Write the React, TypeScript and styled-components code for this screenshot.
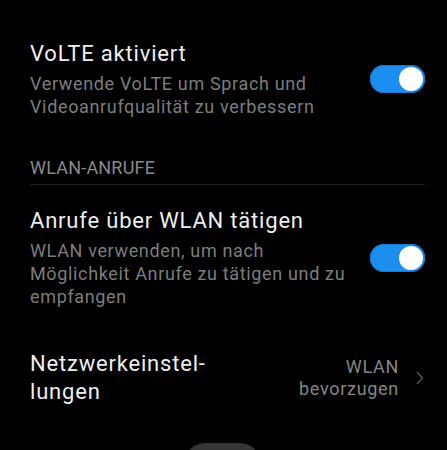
import React, { useState } from "react";
import styled, { createGlobalStyle } from "styled-components";

const GlobalStyle = createGlobalStyle`
  html, body {
    margin: 0;
    padding: 0;
    background: #000;
    overflow: hidden;
  }
  body {
    font-family: Roboto, "Noto Sans", "Liberation Sans", sans-serif;
    -webkit-font-smoothing: antialiased;
  }
`;

const Screen = styled.div`
  position: relative;
  height: 450px;
  overflow: hidden;
  padding: 40px 22px 0 30px;
  box-sizing: border-box;
  background: #000;
`;

const Row = styled.div<{ $gap?: number }>`
  display: flex;
  align-items: center;
  justify-content: space-between;
  margin-top: ${(p) => p.$gap ?? 0}px;
`;

const TextBlock = styled.div`
  display: flex;
  flex-direction: column;
  min-width: 0;
`;

const Title = styled.div`
  color: #eeeeee;
  font-size: 22px;
  line-height: 28px;
  letter-spacing: 0.8px;
`;

const Subtitle = styled.div`
  color: #7d7d7d;
  font-size: 18px;
  line-height: 23px;
  letter-spacing: 0.65px;
  margin-top: 4px;
`;

const SectionHeader = styled.div`
  color: #8a8a8a;
  font-size: 18px;
  line-height: 23px;
  letter-spacing: 0.2px;
  margin-top: 38px;
  padding-bottom: 5px;
  border-bottom: 1px solid #1e1e1e;
`;

const Track = styled.button<{ $on: boolean }>`
  flex: none;
  width: 55px;
  height: 28px;
  border-radius: 14px;
  border: none;
  padding: 0 2px;
  display: flex;
  align-items: center;
  justify-content: ${(p) => (p.$on ? "flex-end" : "flex-start")};
  background: ${(p) => (p.$on ? "#1c8ef0" : "#3a3a3a")};
  box-shadow: inset 0 0 0 1px ${(p) => (p.$on ? "#1679cf" : "#444")};
  cursor: pointer;
`;

const Knob = styled.span`
  width: 24px;
  height: 24px;
  border-radius: 50%;
  background: #fff;
`;

const ValueWrap = styled.div`
  display: flex;
  align-items: center;
  gap: 17px;
  flex: none;
`;

const Value = styled.div`
  color: #858585;
  font-size: 18px;
  line-height: 22px;
  letter-spacing: 0.7px;
  text-align: right;
`;

const Chevron = styled.svg`
  width: 8px;
  height: 14px;
  margin-right: 1px;
`;

const FloatingPill = styled.div`
  position: absolute;
  left: 185px;
  top: 443px;
  width: 75px;
  height: 40px;
  border-radius: 20px;
  background: #353535;
`;

const Toggle = ({ initial }: { initial: boolean }) => {
  const [on, setOn] = useState(initial);
  return (
    <Track $on={on} onClick={() => setOn(!on)}>
      <Knob />
    </Track>
  );
};

export default function App() {
  return (
    <>
      <GlobalStyle />
      <Screen>
        <Row>
          <TextBlock>
            <Title>VoLTE aktiviert</Title>
            <Subtitle>
              Verwende VoLTE um Sprach und
              <br />
              Videoanrufqualität zu verbessern
            </Subtitle>
          </TextBlock>
          <Toggle initial={true} />
        </Row>

        <SectionHeader>WLAN-ANRUFE</SectionHeader>

        <Row $gap={22}>
          <TextBlock>
            <Title>Anrufe über WLAN tätigen</Title>
            <Subtitle>
              WLAN verwenden, um nach
              <br />
              Möglichkeit Anrufe zu tätigen und zu
              <br />
              empfangen
            </Subtitle>
          </TextBlock>
          <Toggle initial={true} />
        </Row>

        <Row $gap={42}>
          <TextBlock>
            <Title>
              Netzwerkeinstel-
              <br />
              lungen
            </Title>
          </TextBlock>
          <ValueWrap>
            <Value>
              WLAN
              <br />
              bevorzugen
            </Value>
            <Chevron viewBox="0 0 8 14">
              <path
                d="M1 1 L6.5 7 L1 13"
                fill="none"
                stroke="#5a5a5a"
                strokeWidth="1.3"
              />
            </Chevron>
          </ValueWrap>
        </Row>

        <FloatingPill />
      </Screen>
    </>
  );
}
